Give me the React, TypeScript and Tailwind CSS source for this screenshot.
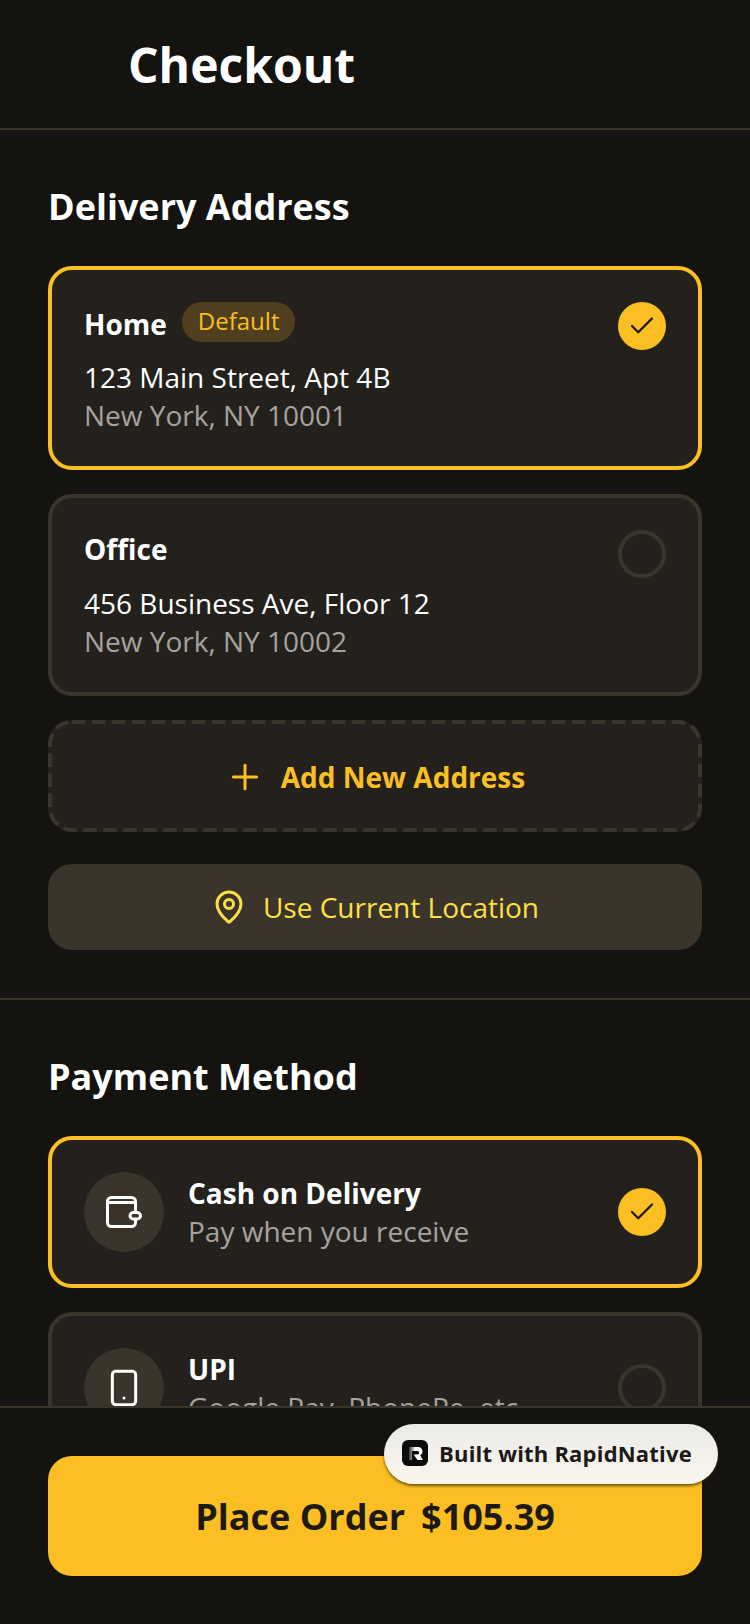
import { Check, MapPin, Plus, Smartphone } from 'lucide-react'

const sans = "font-['Open_Sans','Noto_Sans',sans-serif]"

function Radio({ on }: { on: boolean }) {
  if (on) {
    return (
      <div className="w-12 h-12 rounded-full bg-[#fbbf24] flex items-center justify-center shrink-0">
        <Check size={30} strokeWidth={1.800} className="text-[#1c1917]" />
      </div>
    )
  }
  return <div className="w-12 h-12 rounded-full border-4 border-[#3a352b] shrink-0" />
}

function WalletIcon() {
  return (
    <svg width="36" height="32" viewBox="0 0 36 32" fill="none" stroke="currentColor" strokeWidth="3">
      <rect x="1.500" y="1.500" width="28" height="29" rx="4" />
      <path d="M1.500 6.500h28" />
      <rect x="24" y="16.500" width="10.500" height="6.500" rx="3.250" fill="#3a342b" />
    </svg>
  )
}

function AddressCard({ name, line1, line2, isDefault }: { name: string; line1: string; line2: string; isDefault?: boolean }) {
  return (
    <div className={`rounded-3xl border-4 bg-[#24211c] p-8 flex justify-between items-start ${isDefault ? 'border-[#fbbf24]' : 'border-[#3a352b]'}`}>
      <div>
        <div className={`flex items-center gap-[15px] ${isDefault ? 'h-10' : 'h-[38px]'}`}>
          <span className={`text-[28px] leading-[38px] font-bold text-white ${isDefault ? 'pt-[3px]' : ''}`}>{name}</span>
          {isDefault && (
            <span className="rounded-full bg-[#4f3f1f] px-4 pb-[2px] h-10 flex items-center text-2xl text-[#fbbf24]">Default</span>
          )}
        </div>
        <div className="mt-4 text-[28px] leading-[38px] text-white">{line1}</div>
        <div className="text-[28px] leading-[38px] text-[#a8a29e]">{line2}</div>
      </div>
      <Radio on={!!isDefault} />
    </div>
  )
}

function PaymentCard({ title, sub, selected, icon }: { title: string; sub: string; selected?: boolean; icon: React.ReactNode }) {
  return (
    <div className={`rounded-3xl border-4 bg-[#24211c] p-8 flex items-center gap-6 ${selected ? 'border-[#fbbf24]' : 'border-[#3a352b]'}`}>
      <div className="w-20 h-20 rounded-full bg-[#3a342b] flex items-center justify-center shrink-0 text-white">{icon}</div>
      <div className="flex-1">
        <div className="text-[28px] leading-9 font-bold text-white">{title}</div>
        <div className="mt-px text-[28px] leading-[38px] text-[#a8a29e]">{sub}</div>
      </div>
      <Radio on={!!selected} />
    </div>
  )
}

export default function App() {
  return (
    <div className={`${sans} relative w-[750px] h-[1624px] overflow-hidden bg-[#14130f]`}>
      {/* Header */}
      <div className="h-[130px] border-b-2 border-[#3a352b] pl-[128px] pt-[31px]">
        <h1 className="text-[48px] leading-[68px] font-bold text-white">Checkout</h1>
      </div>

      {/* Delivery */}
      <div className="px-12 pt-12 pb-12 border-b-2 border-[#3a352b] h-[870px]">
        <h2 className="text-4xl leading-[58px] font-bold text-white mb-[30px]">Delivery Address</h2>
        <div className="flex flex-col gap-6">
          <AddressCard name="Home" line1="123 Main Street, Apt 4B" line2="New York, NY 10001" isDefault />
          <AddressCard name="Office" line1="456 Business Ave, Floor 12" line2="New York, NY 10002" />
          <div className="relative h-28 pt-[2px] rounded-3xl bg-[#24211c] flex items-center justify-center gap-4 text-[#fbbf24]">
            {/* dashed outline: css dashes come out too short at this width */}
            <svg className="absolute inset-0" width="654" height="112" fill="none">
              <rect x="2" y="2" width="650" height="108" rx="22" stroke="#3a352b" strokeWidth="4" strokeDasharray="13.500 6.500" />
            </svg>
            <Plus size={40} strokeWidth={1.800} />
            <span className="text-[28px] font-bold">Add New Address</span>
          </div>
        </div>
        <div className="mt-8 h-[86px] rounded-3xl bg-[#3a342b] flex items-center justify-center gap-4 text-[#fde047]">
          <MapPin size={36} strokeWidth={2} />
          <span className="text-[28px]">Use Current Location</span>
        </div>
      </div>

      {/* Payment */}
      <div className="px-12 pt-12">
        <h2 className="text-4xl leading-[58px] font-bold text-white mb-[30px]">Payment Method</h2>
        <div className="flex flex-col gap-6">
          <PaymentCard title="Cash on Delivery" sub="Pay when you receive" selected icon={<WalletIcon />} />
          <PaymentCard title="UPI" sub="Google Pay, PhonePe, etc." icon={<Smartphone size={40} strokeWidth={1.800} />} />
        </div>
      </div>

      {/* Bottom bar */}
      <div className="absolute left-0 right-0 top-[1406px] bottom-0 bg-[#14130f] border-t-2 border-[#3a352b] px-12 pt-[48px]">
        <div className="h-[120px] rounded-3xl bg-[#fbbf24] flex items-center justify-center gap-4 text-[#1c1917] text-4xl font-bold pt-[2px]">
          <span>Place Order</span>
          <span>$105.39</span>
        </div>
      </div>

      {/* Badge */}
      <div className="absolute left-[384px] top-[1424px] w-[334px] h-[60px] pb-[2px] rounded-full bg-gradient-to-b from-[#ebebe9] to-[#fbf6ec] shadow-[0_2px_3px_rgba(60,40,0,0.7)] flex items-center gap-[11px] pl-[18px]">
        <svg width="26" height="26" viewBox="0 0 26 26">
          <defs>
            <linearGradient id="rn" x1="0" x2="1" y1="0" y2="0">
              <stop offset="0" stopColor="#333" />
              <stop offset="0.450" stopColor="#fff" />
            </linearGradient>
          </defs>
          <rect width="26" height="26" rx="6" fill="#0b0b0b" />
          <path d="M7 7h9a4.500 4.500 0 0 1 2.200 8.400L21 20h-5.500l-4-5.500h4a1.700 1.700 0 0 0 0-3.500H10v9H7z" fill="url(#rn)" />
        </svg>
        <span className="text-[22px] font-bold tracking-[0.2px] text-[#1c1917]">Built with RapidNative</span>
      </div>
    </div>
  )
}
